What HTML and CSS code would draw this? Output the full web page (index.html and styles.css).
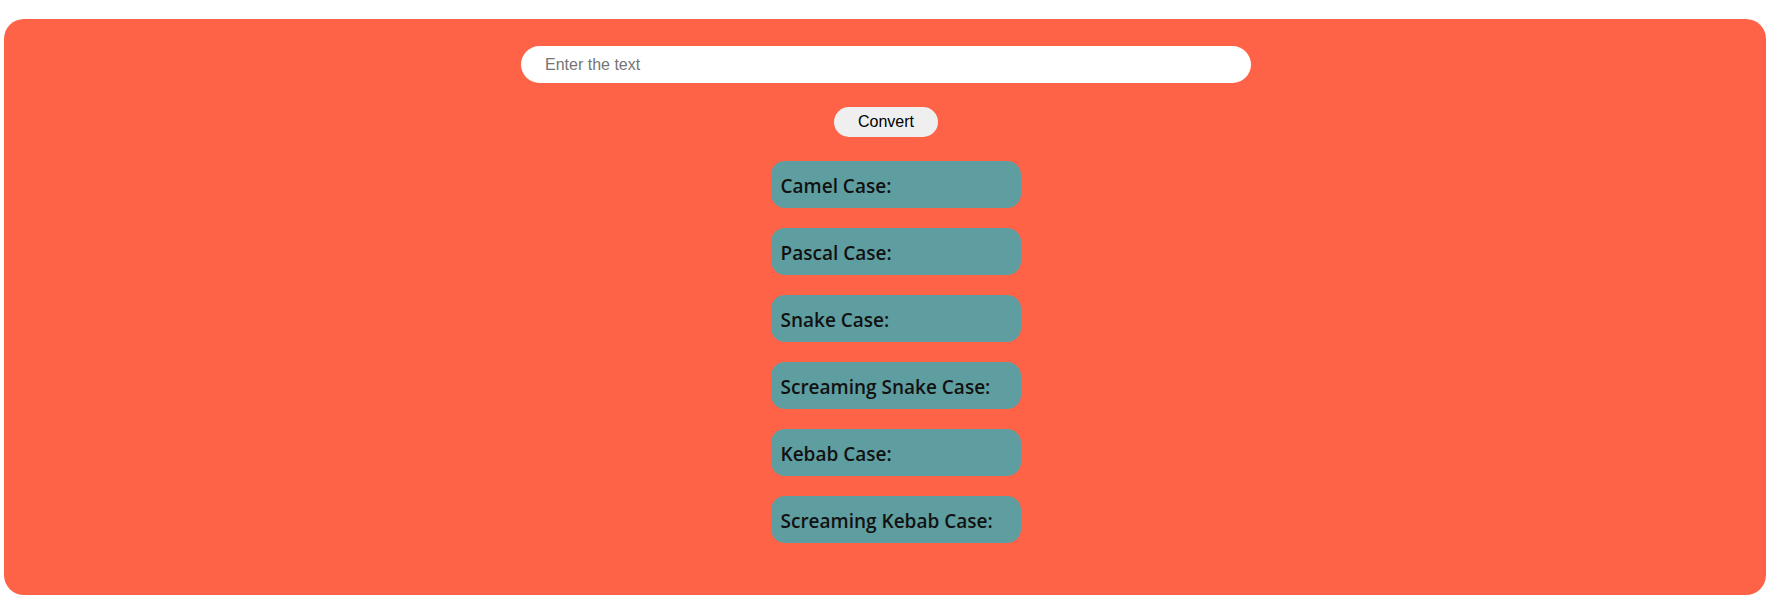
FILE: index.html
```html
<!DOCTYPE html>
<html lang="en">
<head>
<meta charset="utf-8">
<title>Case Converter</title>
<link rel="stylesheet" href="styles.css">
</head>
<body>
<main class="app">
  <input class="text-input" type="text" placeholder="Enter the text">
  <button class="convert-btn" type="button">Convert</button>
  <div class="results">
    <div class="result-card">Camel Case:</div>
    <div class="result-card">Pascal Case:</div>
    <div class="result-card">Snake Case:</div>
    <div class="result-card">Screaming Snake Case:</div>
    <div class="result-card">Kebab Case:</div>
    <div class="result-card">Screaming Kebab Case:</div>
  </div>
</main>
</body>
</html>
```

FILE: styles.css
```css
html, body {
  margin: 0;
  padding: 0;
  background: #ffffff;
}

.app {
  box-sizing: border-box;
  margin: 19px 6px 6px 4px;
  height: 576px;
  background: #ff6347;
  border-radius: 20px;
  padding-top: 27px;
  display: flex;
  flex-direction: column;
  align-items: center;
}

.text-input {
  box-sizing: border-box;
  width: 730px;
  height: 37px;
  border: none;
  outline: none;
  border-radius: 19px;
  padding: 0 24px;
  font-family: "Liberation Sans", Arial, sans-serif;
  font-size: 16px;
  color: #000;
  background: #ffffff;
  margin-left: 2px;
}

.text-input::placeholder {
  color: #757575;
}

.convert-btn {
  box-sizing: border-box;
  margin-top: 24px;
  width: 104px;
  height: 30px;
  border: none;
  border-radius: 15px;
  background: #efefef;
  font-family: "Liberation Sans", Arial, sans-serif;
  font-size: 16px;
  color: #000;
  padding: 0;
  margin-left: 2px;
}

.results {
  margin-top: 24px;
  display: flex;
  flex-direction: column;
  gap: 20px;
  margin-left: 21px;
}

.result-card {
  box-sizing: border-box;
  width: 250px;
  height: 47px;
  padding: 2px 10px 0;
  border-radius: 14px;
  background: #5f9ea0;
  display: flex;
  align-items: center;
  font-family: "Open Sans", "Noto Sans", sans-serif;
  font-size: 19px;
  font-weight: 600;
  color: #111;
}
```
